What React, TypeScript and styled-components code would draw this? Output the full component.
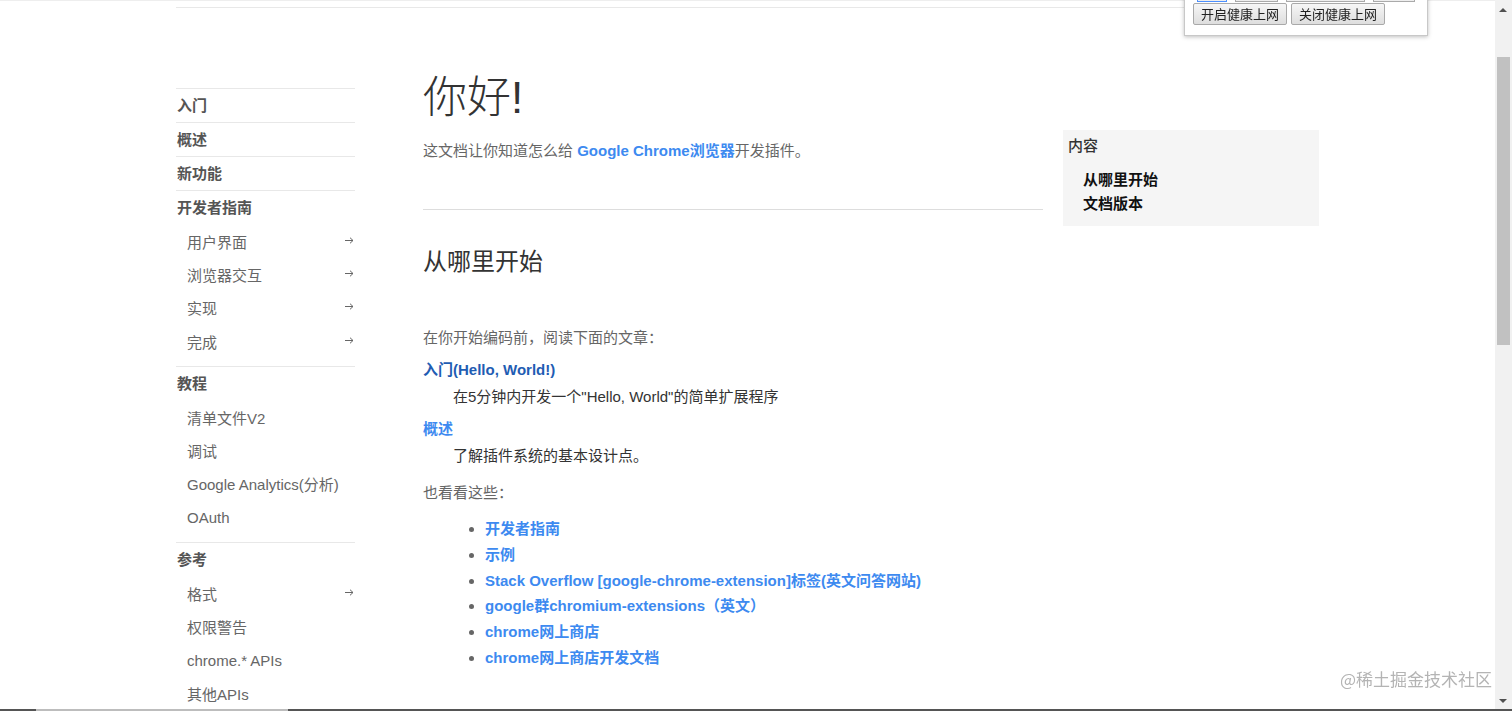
import React from "react";
import styled, { createGlobalStyle } from "styled-components";

const Global = createGlobalStyle`
  html, body { margin: 0; padding: 0; overflow: hidden; background: #fff; }
  body {
    height: 711px;
    font-family: "Liberation Sans", Arial, "Noto Sans CJK SC", sans-serif;
    color: #333;
  }
  * { box-sizing: border-box; }
`;

const Page = styled.div`
  width: 1495px;
  height: 711px;
  border-top: 1px solid #eeeeee;
`;

const Frame = styled.div`
  width: 1143px;
  margin-left: 176px;
`;

const HeaderBar = styled.div`
  height: 7px;
  border-bottom: 1px solid #e8e8e8;
`;

const Columns = styled.div`
  display: flex;
  align-items: flex-start;
`;

const Sidebar = styled.nav`
  width: 179px;
  margin-top: 80px;
  flex-shrink: 0;
`;

const NavGroup = styled.div<{ $subs?: boolean }>`
  border-top: 1px solid #e8e8e8;
  padding-bottom: ${(p) => (p.$subs ? "9px" : "0")};
`;

const NavHead = styled.div`
  line-height: 33px;
  font-size: 15px;
  font-weight: bold;
  color: #555;
  padding-left: 1px;
`;

const NavSub = styled.div`
  display: flex;
  justify-content: space-between;
  align-items: center;
  padding-left: 11px;
  height: 33.3px;
  padding-top: 1px;
  font-size: 15px;
  color: #666;
`;

const ArrowIcon = styled.svg`
  width: 9px;
  height: 7px;
  margin-right: 1px;
  margin-top: -2px;
`;

const Main = styled.main`
  width: 620px;
  margin-left: 68px;
  margin-top: 64px;
  flex-shrink: 0;
`;

const Title = styled.h1`
  margin: 0;
  font-size: 44px;
  line-height: 52px;
  font-weight: 300;
  color: #333;
`;

const Lead = styled.p`
  margin: 15px 0 0;
  font-size: 15px;
  line-height: 24px;
  color: #666;
`;

const Link = styled.a<{ $dark?: boolean }>`
  color: ${(p) => (p.$dark ? "#1f5db3" : "#3d8af0")};
  font-weight: bold;
  text-decoration: none;
`;

const Rule = styled.hr`
  margin: 46px 0 0;
  border: 0;
  border-top: 1px solid #dddddd;
  height: 0;
`;

const SectionTitle = styled.h2`
  margin: 36px 0 0;
  font-size: 24px;
  line-height: 32px;
  font-weight: normal;
  color: #333;
`;

const Para = styled.p<{ $top: number }>`
  margin: ${(p) => p.$top}px 0 0;
  font-size: 15px;
  line-height: 24px;
  color: #666;
`;

const DefList = styled.dl`
  margin: 6px 0 0;
`;

const Term = styled.dt`
  font-size: 15px;
  line-height: 27px;
  margin-top: 5px;
  &:first-child { margin-top: 0; }
`;

const Desc = styled.dd`
  margin: 0 0 0 30px;
  font-size: 15px;
  line-height: 27px;
  color: #333;
`;

const LinkList = styled.ul`
  margin: 11px 0 0;
  padding-left: 62px;
  color: #666;
`;

const LinkItem = styled.li`
  font-size: 15px;
  line-height: 25.8px;
`;

const Toc = styled.aside`
  width: 256px;
  margin-left: 20px;
  margin-top: 122px;
  background: #f5f5f5;
  padding: 4px 5px 10px;
  flex-shrink: 0;
`;

const TocTitle = styled.div`
  font-size: 15px;
  line-height: 24px;
  color: #333;
  font-weight: 500;
`;

const TocList = styled.div`
  margin-top: 10px;
  padding-left: 15px;
`;

const TocItem = styled.div`
  font-size: 15px;
  line-height: 24px;
  font-weight: bold;
  color: #111;
`;

const Popup = styled.div`
  position: fixed;
  top: -29px;
  left: 1184px;
  width: 244px;
  background: #fff;
  border: 1px solid #c8c8c8;
  box-shadow: 0 1px 4px rgba(0, 0, 0, 0.25);
  padding: 6px 8px 10px;
`;

const PopupRow = styled.div`
  display: flex;
  gap: 4px;
  align-items: flex-end;
`;

const GhostField = styled.div<{ $w: number; $blue?: boolean }>`
  width: ${(p) => p.$w}px;
  height: 24px;
  margin-left: 4px;
  border: 1px solid ${(p) => (p.$blue ? "#4d90fe" : "#aaa")};
  background: #eee;
`;

const PopButton = styled.button`
  margin-top: 1px;
  height: 22px;
  padding: 0 7px;
  font-family: "Noto Sans CJK SC", sans-serif;
  font-size: 13px;
  color: #222;
  border: 1px solid #a9a9a9;
  border-radius: 2px;
  background: linear-gradient(#f6f6f6, #dedede);
  line-height: 20px;
`;

const ScrollBar = styled.div`
  position: fixed;
  top: 0;
  right: 0;
  width: 17px;
  height: 709px;
  background: #f1f1f1;
`;

const ScrollUp = styled.div`
  position: absolute;
  top: 8px;
  left: 4px;
  width: 0;
  height: 0;
  border-left: 4px solid transparent;
  border-right: 4px solid transparent;
  border-bottom: 4px solid #505050;
`;

const ScrollDown = styled.div`
  position: absolute;
  bottom: 6px;
  left: 4px;
  width: 0;
  height: 0;
  border-left: 4px solid transparent;
  border-right: 4px solid transparent;
  border-top: 4px solid #505050;
`;

const ScrollThumb = styled.div`
  position: absolute;
  top: 57px;
  left: 2px;
  width: 13px;
  height: 288px;
  background: #c1c1c1;
`;

const BottomEdge = styled.div`
  position: fixed;
  left: 0;
  bottom: 0;
  width: 100%;
  height: 2px;
  background: #555;
`;

const EdgeThumb = styled.div`
  position: absolute;
  left: 36px;
  top: 0;
  width: 252px;
  height: 2px;
  background: #bdbdbd;
`;

const Watermark = styled.div`
  position: fixed;
  right: 20px;
  bottom: 20px;
  font-family: "Noto Sans CJK SC", sans-serif;
  font-size: 17px;
  color: #b4b4b4;
  text-shadow: 0 0 1px #fff;
`;

type Group = { head: string; subs?: { label: string; arrow?: boolean }[] };

const nav: Group[] = [
  { head: "入门" },
  { head: "概述" },
  { head: "新功能" },
  {
    head: "开发者指南",
    subs: [
      { label: "用户界面", arrow: true },
      { label: "浏览器交互", arrow: true },
      { label: "实现", arrow: true },
      { label: "完成", arrow: true },
    ],
  },
  {
    head: "教程",
    subs: [
      { label: "清单文件V2" },
      { label: "调试" },
      { label: "Google Analytics(分析)" },
      { label: "OAuth" },
    ],
  },
  {
    head: "参考",
    subs: [
      { label: "格式", arrow: true },
      { label: "权限警告" },
      { label: "chrome.* APIs" },
      { label: "其他APIs" },
    ],
  },
];

const seeAlso = [
  "开发者指南",
  "示例",
  "Stack Overflow [google-chrome-extension]标签(英文问答网站)",
  "google群chromium-extensions（英文）",
  "chrome网上商店",
  "chrome网上商店开发文档",
];

function Arrow() {
  return (
    <ArrowIcon viewBox="0 0 9 7" fill="none" stroke="#666" strokeWidth="1">
      <path d="M0 3.5H8M5 0.7L8 3.5L5 6.3" />
    </ArrowIcon>
  );
}

export default function App() {
  return (
    <>
      <Global />
      <Page>
        <Frame>
          <HeaderBar />
          <Columns>
            <Sidebar>
              {nav.map((g) => (
                <NavGroup key={g.head} $subs={!!g.subs}>
                  <NavHead>{g.head}</NavHead>
                  {g.subs?.map((s) => (
                    <NavSub key={s.label}>
                      <span>{s.label}</span>
                      {s.arrow && <Arrow />}
                    </NavSub>
                  ))}
                </NavGroup>
              ))}
            </Sidebar>
            <Main>
              <Title>你好!</Title>
              <Lead>
                这文档让你知道怎么给 <Link>Google Chrome浏览器</Link>开发插件。
              </Lead>
              <Rule />
              <SectionTitle>从哪里开始</SectionTitle>
              <Para $top={48}>在你开始编码前，阅读下面的文章：</Para>
              <DefList>
                <Term>
                  <Link $dark>入门(Hello, World!)</Link>
                </Term>
                <Desc>在5分钟内开发一个"Hello, World"的简单扩展程序</Desc>
                <Term>
                  <Link>概述</Link>
                </Term>
                <Desc>了解插件系统的基本设计点。</Desc>
              </DefList>
              <Para $top={12}>也看看这些：</Para>
              <LinkList>
                {seeAlso.map((t) => (
                  <LinkItem key={t}>
                    <Link>{t}</Link>
                  </LinkItem>
                ))}
              </LinkList>
            </Main>
            <Toc>
              <TocTitle>内容</TocTitle>
              <TocList>
                <TocItem>从哪里开始</TocItem>
                <TocItem>文档版本</TocItem>
              </TocList>
            </Toc>
          </Columns>
        </Frame>
      </Page>
      <Popup>
        <PopupRow>
          <GhostField $w={30} $blue />
          <GhostField $w={43} />
          <GhostField $w={79} />
          <GhostField $w={42} />
        </PopupRow>
        <PopupRow>
          <PopButton>开启健康上网</PopButton>
          <PopButton>关闭健康上网</PopButton>
        </PopupRow>
      </Popup>
      <ScrollBar>
        <ScrollUp />
        <ScrollThumb />
        <ScrollDown />
      </ScrollBar>
      <BottomEdge>
        <EdgeThumb />
      </BottomEdge>
      <Watermark>@稀土掘金技术社区</Watermark>
    </>
  );
}
